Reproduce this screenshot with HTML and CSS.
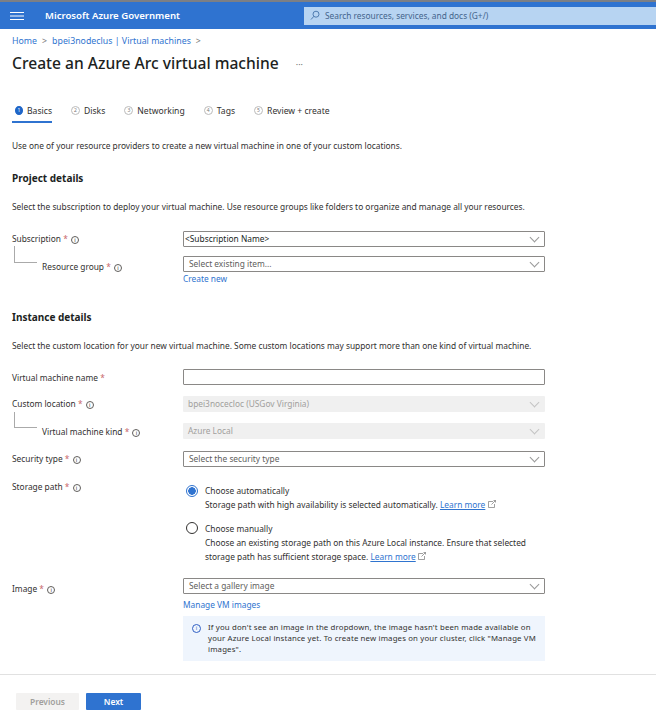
FILE: index.html
```html
<!DOCTYPE html>
<html lang="en">
<head>
    <meta charset="UTF-8">
    <meta name="viewport" content="width=device-width, initial-scale=1.0">
    <title>Create an Azure Arc virtual machine</title>
    <link rel="stylesheet" href="styles.css">
</head>
<body>

    <header class="topbar">
        <svg class="menu-icon" width="14" height="10" viewBox="0 0 14 10"><path d="M0 1.5h14M0 5h14M0 8.5h14" stroke="#fff" stroke-width="1"/></svg>
        <span class="brand">Microsoft Azure Government</span>
        <div class="search">
            <svg width="11" height="11" viewBox="0 0 11 11" fill="none" stroke="#4f7cb0"><circle cx="6" cy="4.2" r="3"/><path d="M3.9 6.3 1 9.5"/></svg>
            <span>Search resources, services, and docs (G+/)</span>
        </div>
    </header>

    <nav class="crumbs">
        <a>Home</a><span class="sep">&gt;</span><a>bpei3nodeclus | Virtual machines</a><span class="sep">&gt;</span>
    </nav>
    <div class="title-row">
        <h1>Create an Azure Arc virtual machine</h1>
        <span class="dots">···</span>
    </div>

    <div class="tabs">
        <div class="tab active"><span class="num">1</span>Basics</div>
        <div class="tab"><span class="num">2</span>Disks</div>
        <div class="tab"><span class="num">3</span>Networking</div>
        <div class="tab"><span class="num">4</span>Tags</div>
        <div class="tab"><span class="num">5</span>Review + create</div>
    </div>

    <p class="intro">Use one of your resource providers to create a new virtual machine in one of your custom locations.</p>

    <h2 class="first">Project details</h2>
    <p class="desc">Select the subscription to deploy your virtual machine. Use resource groups like folders to organize and manage all your resources.</p>

    <div class="row row-sub">
        <label>Subscription <i>*</i> <span class="info">i</span></label>
        <div class="select strong">&lt;Subscription Name&gt;</div>
    </div>
    <div class="row row-child row-group">
        <label>Resource group <i>*</i> <span class="info">i</span></label>
        <div>
            <div class="select">Select existing item...</div>
            <a class="link">Create new</a>
        </div>
    </div>

    <h2 class="second">Instance details</h2>
    <p class="desc">Select the custom location for your new virtual machine. Some custom locations may support more than one kind of virtual machine.</p>

    <div class="row row-name">
        <label>Virtual machine name <i>*</i></label>
        <div class="input"></div>
    </div>
    <div class="row row-loc">
        <label>Custom location <i>*</i> <span class="info">i</span></label>
        <div class="select off">bpei3nocecloc (USGov Virginia)</div>
    </div>
    <div class="row row-child row-kind">
        <label>Virtual machine kind <i>*</i> <span class="info">i</span></label>
        <div class="select off">Azure Local</div>
    </div>
    <div class="row row-sec">
        <label>Security type <i>*</i> <span class="info">i</span></label>
        <div class="select">Select the security type</div>
    </div>
    <div class="row row-path">
        <label>Storage path <i>*</i> <span class="info">i</span></label>
        <div class="radios">
            <div class="radio on">
                <span class="dot"></span>
                <div>Choose automatically<br>Storage path with high availability is selected automatically. <a class="under">Learn more</a>
                    <svg class="ext" width="8" height="8" viewBox="0 0 8 8" fill="none" stroke="#777" stroke-width=".7"><path d="M5 1.5H.5v6h6V4M3.5 4.5 7.5.5M5.5.5h2v2"/></svg>
                </div>
            </div>
            <div class="radio">
                <span class="dot"></span>
                <div>Choose manually<br>Choose an existing storage path on this Azure Local instance. Ensure that selected<br>storage path has sufficient storage space. <a class="under">Learn more</a>
                    <svg class="ext" width="8" height="8" viewBox="0 0 8 8" fill="none" stroke="#777" stroke-width=".7"><path d="M5 1.5H.5v6h6V4M3.5 4.5 7.5.5M5.5.5h2v2"/></svg>
                </div>
            </div>
        </div>
    </div>
    <div class="row row-img">
        <label>Image <i>*</i> <span class="info">i</span></label>
        <div>
            <div class="select">Select a gallery image</div>
            <a class="link spaced">Manage VM images</a>
            <div class="notice">
                <span class="info blue">i</span>
                <p>If you don't see an image in the dropdown, the image hasn't been made available on your Azure Local instance yet. To create new images on your cluster, click "Manage VM<br>images".</p>
            </div>
        </div>
    </div>

    <footer class="actions">
        <button class="prev">Previous</button>
        <button class="next">Next</button>
    </footer>

</body>
</html>
```

FILE: styles.css
```css
* {
    box-sizing: border-box;
}
html, body {
    height: 720px;
    overflow: hidden;
}
body {
    margin: 0;
    font-family: 'Noto Sans', 'Open Sans', sans-serif;
    font-size: 8.36px;
    line-height: 12px;
    color: #323130;
    background: #fff;
}
a {
    color: #2f74cf;
}

/* top bar */
.topbar {
    height: 29px;
    border-top: 2px solid #7c7f85;
    background: #2f73d0;
    display: flex;
    align-items: center;
    padding-left: 10px;
}
.brand {
    margin-left: 21px;
    color: #fff;
    font-size: 9.6px;
    font-weight: 600;
}
.search {
    margin-left: auto;
    width: 352px;
    height: 18px;
    background: #b7d4f2;
    display: flex;
    align-items: center;
    gap: 4px;
    padding-left: 6px;
    color: #44648c;
}

.crumbs {
    margin: 6px 0 0 12px;
    height: 12px;
    font-size: 8.8px;
    display: flex;
    color: #2f74cf;
}
.sep {
    margin: 0 5px;
    color: #777;
}
.title-row {
    margin: 4px 0 0 12px;
    display: flex;
    align-items: center;
    gap: 17px;
}
h1 {
    margin: 0;
    font-size: 15.6px;
    line-height: 24px;
    font-weight: 500;
    color: #201f1e;
}
.dots {
    margin-top: 3px;
    color: #777;
    font-size: 9px;
}

/* tabs */
.tabs {
    margin: 30px 0 0 12px;
    display: flex;
    gap: 19px;
    height: 18px;
    font-size: 8.6px;
}
.tab {
    display: flex;
    align-items: flex-start;
    gap: 4px;
}
.tab.active {
    width: 40px;
    border-bottom: 2px solid #2f73d0;
    padding: 0 0 0 3px;
}
.num {
    width: 9px;
    height: 9px;
    margin-top: 1px;
    border: 1px solid #bbb;
    border-radius: 50%;
    font-size: 5px;
    line-height: 7px;
    text-align: center;
    color: #777;
}
.active .num {
    background: #1f66c8;
    border-color: #1f66c8;
    color: #fff;
}

.intro {
    margin: 17px 0 0 12px;
}
h2 {
    margin: 0 0 0 12px;
    font-size: 10px;
    line-height: 14px;
    font-weight: 700;
    color: #201f1e;
}
h2.first {
    margin-top: 19px;
}
h2.second {
    margin-top: 25px;
}
.desc {
    margin: 16px 0 0 12px;
}

/* form rows */
.row {
    display: grid;
    grid-template-columns: 171px 362px;
    margin-left: 12px;
    position: relative;
}
.row label {
    padding-top: 2px;
}
.row i {
    color: #c8686c;
    font-style: normal;
}
.row-child label {
    padding-left: 30px;
}
.row-child::before {
    content: "";
    position: absolute;
    left: 2px;
    top: -10px;
    width: 22px;
    height: 16px;
    border-left: 1px solid #aaa;
    border-bottom: 1px solid #aaa;
}
.row-sub {
    margin-top: 18px;
}
.row-group {
    margin-top: 9px;
}
.row-group label {
    padding-top: 5px;
}
.row-name {
    margin-top: 17px;
}
.row-name label {
    padding-top: 3px;
}
.row-loc {
    margin-top: 11px;
}
.row-kind {
    margin-top: 11px;
}
.row-kind label {
    padding-top: 3px;
}
.row-kind::before {
    top: -11px;
    height: 15px;
}
.row-sec {
    margin-top: 12px;
}
.row-path {
    margin-top: 14px;
}
.row-path label {
    padding-top: 0;
}
.row-img {
    margin-top: 14px;
}
.row-img label {
    padding-top: 5px;
}
.select, .input {
    height: 16px;
    border: 1px solid #8a8886;
    border-radius: 1px;
    padding-left: 5px;
    line-height: 13px;
    color: #605e5c;
    position: relative;
}
.select::after {
    content: "";
    position: absolute;
    right: 6px;
    top: 2px;
    width: 6px;
    height: 6px;
    border-right: 1px solid #999;
    border-bottom: 1px solid #999;
    transform: rotate(45deg);
}
.select.strong {
    padding-left: 1px;
    color: #201f1e;
}
.select.off {
    border: none;
    background: #f0f0f0;
    color: #a19f9d;
    line-height: 16px;
}
.select.off::after {
    top: 3px;
    right: 7px;
    border-color: #c4c4c4;
}
.link {
    display: block;
    margin-top: 1px;
}
.link.spaced {
    margin-top: 5px;
}
.under {
    text-decoration: underline;
}
.info {
    display: inline-block;
    width: 8px;
    height: 8px;
    margin-left: 1px;
    border: 1px solid #605e5c;
    border-radius: 50%;
    font-size: 5.5px;
    line-height: 6px;
    text-align: center;
    vertical-align: 0;
}
.info.blue {
    flex: none;
    width: 9px;
    height: 9px;
    margin: 2px 0 0;
    border-color: #2f5fc4;
    color: #2f5fc4;
    line-height: 7px;
}

/* storage path radios */
.radios {
    display: flex;
    flex-direction: column;
    gap: 10px;
    margin-top: 3px;
    padding-left: 3px;
}
.radio {
    display: flex;
    gap: 7px;
    line-height: 14px;
}
.dot {
    flex: none;
    width: 12px;
    height: 12px;
    border: 1px solid #323130;
    border-radius: 50%;
}
.radio.on .dot {
    margin-top: 1px;
    border-color: #2f73d0;
    background: radial-gradient(circle, #2f73d0 3.5px, #fff 4px);
}
.ext {
    vertical-align: 0;
}

.notice {
    margin-top: 5px;
    height: 45px;
    background: #eff5fd;
    display: flex;
    gap: 7px;
    padding: 6px 9px;
}
.notice p {
    margin: 0;
    font-size: 7.8px;
    letter-spacing: 0.16px;
    line-height: 11px;
}

/* footer buttons */
.actions {
    margin-top: 13px;
    height: 46px;
    border-top: 1px solid #e1e1e1;
    padding: 18px 0 0 16px;
    display: flex;
    gap: 7px;
}
button {
    height: 17px;
    border: none;
    border-radius: 1px;
    padding: 0;
    font-family: inherit;
    font-size: 8.4px;
    font-weight: 600;
}
.prev {
    width: 63px;
    background: #f3f2f1;
    color: #a19f9d;
}
.next {
    width: 55px;
    background: #2f73d0;
    color: #fff;
}
```
